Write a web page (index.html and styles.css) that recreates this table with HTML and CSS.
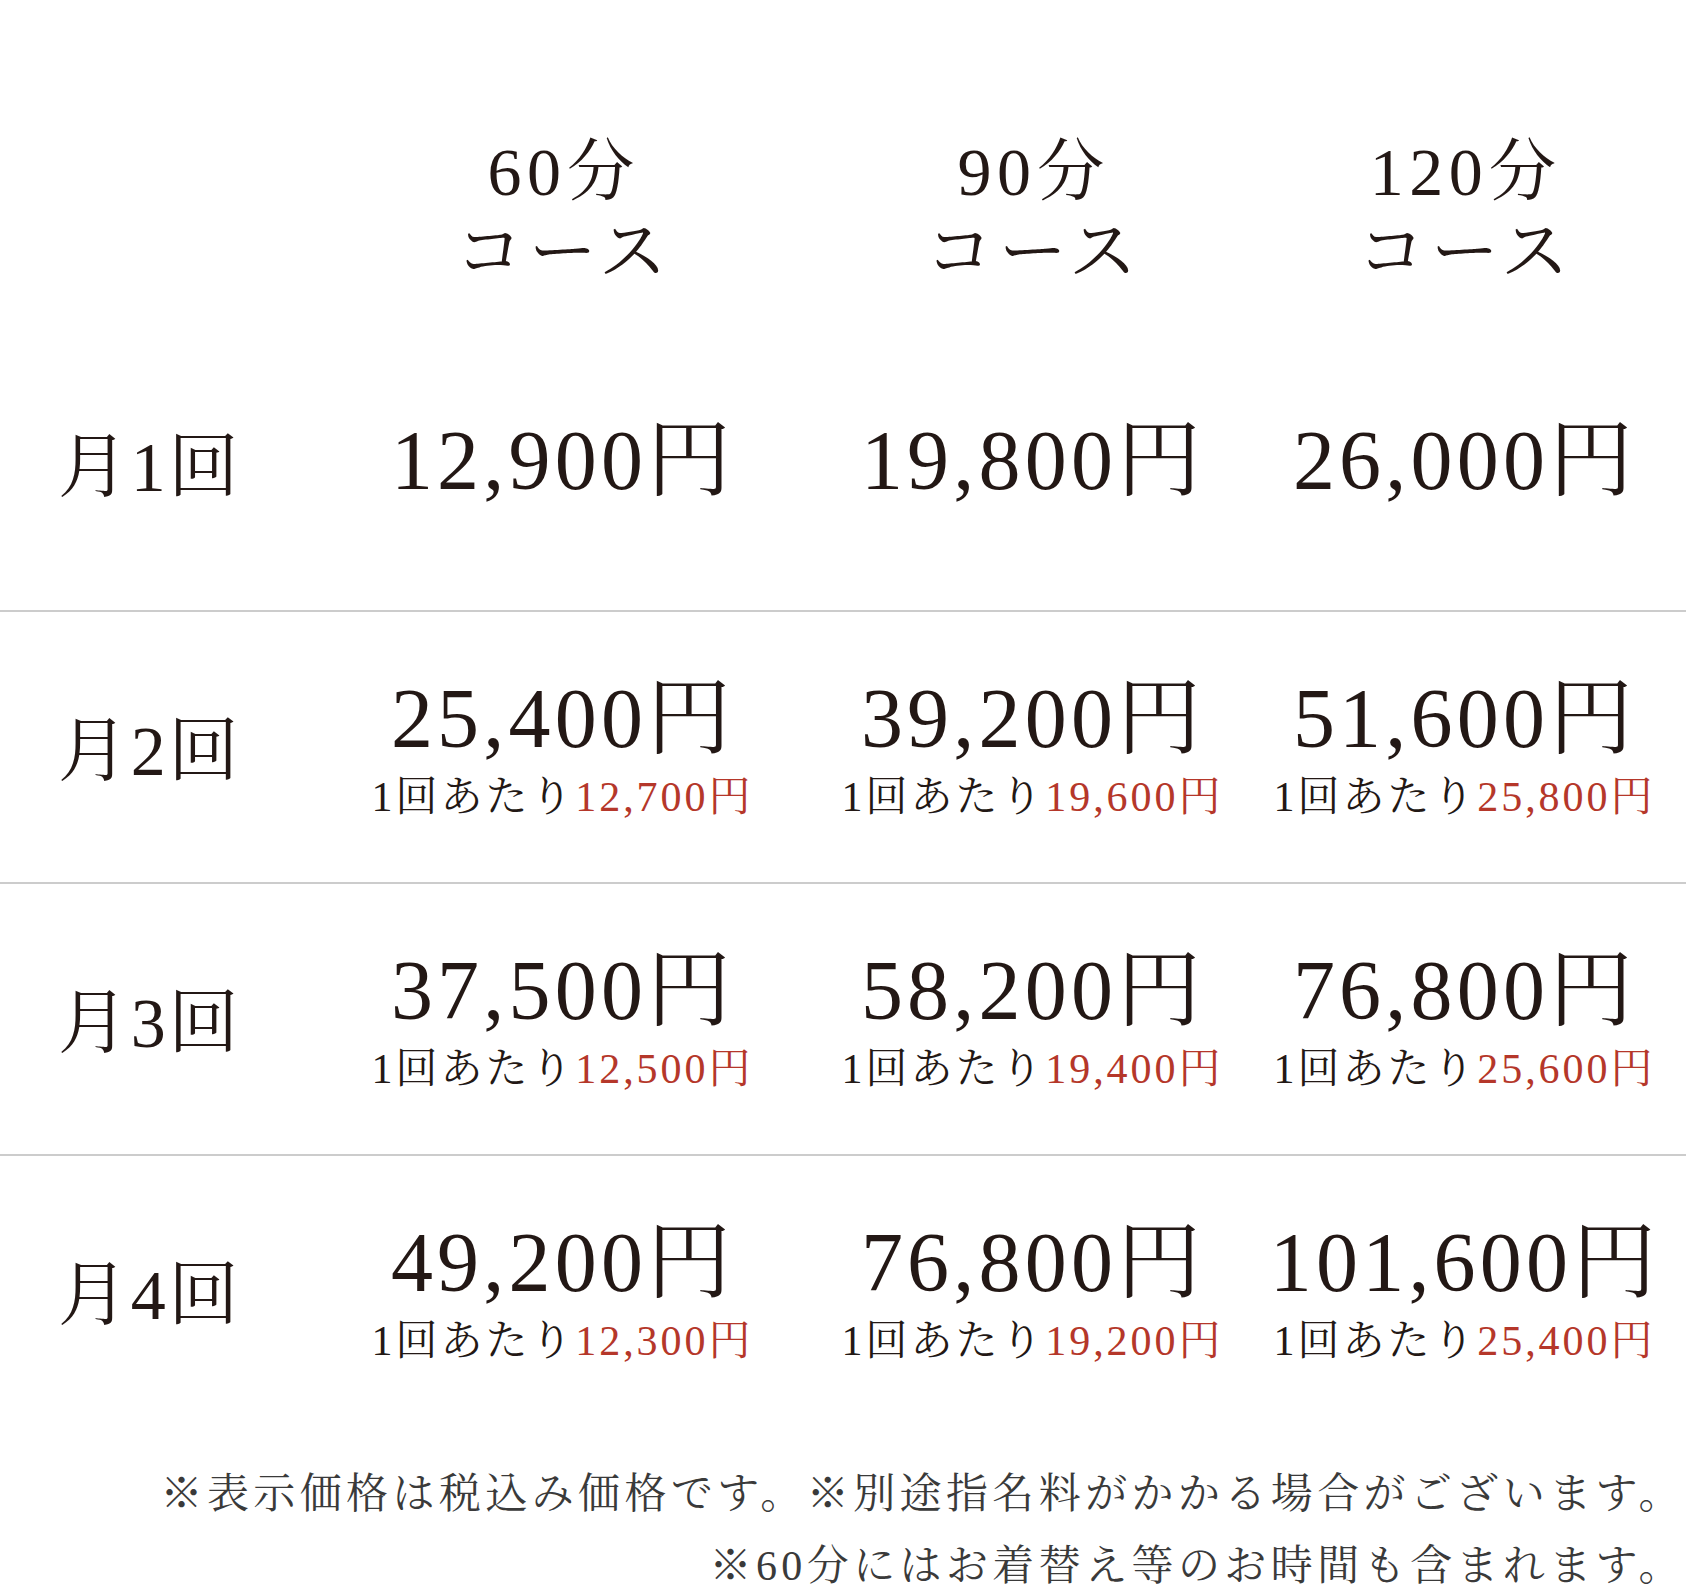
FILE: index.html
```html
<!DOCTYPE html>
<html lang="ja">
<head>
<meta charset="utf-8">
<title>料金表</title>
<link rel="stylesheet" href="styles.css">
</head>
<body>
<div class="price-table">
  <div class="row head">
    <div class="label"></div>
    <div class="cell"><div class="course">60分<br>コース</div></div>
    <div class="cell"><div class="course">90分<br>コース</div></div>
    <div class="cell"><div class="course">120分<br>コース</div></div>
  </div>
  <div class="row first">
    <div class="label">月1回</div>
    <div class="cell"><div class="price">12,900円</div></div>
    <div class="cell"><div class="price">19,800円</div></div>
    <div class="cell"><div class="price">26,000円</div></div>
  </div>
  <div class="row">
    <div class="label">月2回</div>
    <div class="cell"><div class="price">25,400円</div><div class="per">1回あたり<span class="red">12,700円</span></div></div>
    <div class="cell"><div class="price">39,200円</div><div class="per">1回あたり<span class="red">19,600円</span></div></div>
    <div class="cell"><div class="price">51,600円</div><div class="per">1回あたり<span class="red">25,800円</span></div></div>
  </div>
  <div class="row">
    <div class="label">月3回</div>
    <div class="cell"><div class="price">37,500円</div><div class="per">1回あたり<span class="red">12,500円</span></div></div>
    <div class="cell"><div class="price">58,200円</div><div class="per">1回あたり<span class="red">19,400円</span></div></div>
    <div class="cell"><div class="price">76,800円</div><div class="per">1回あたり<span class="red">25,600円</span></div></div>
  </div>
  <div class="row">
    <div class="label">月4回</div>
    <div class="cell"><div class="price">49,200円</div><div class="per">1回あたり<span class="red">12,300円</span></div></div>
    <div class="cell"><div class="price">76,800円</div><div class="per">1回あたり<span class="red">19,200円</span></div></div>
    <div class="cell"><div class="price">101,600円</div><div class="per">1回あたり<span class="red">25,400円</span></div></div>
  </div>
</div>
<div class="notes">
  <p>※表示価格は税込み価格です。※別途指名料がかかる場合がございます。</p>
  <p>※60分にはお着替え等のお時間も含まれます。</p>
</div>
</body>
</html>
```
FILE: styles.css
```css
html, body {
  margin: 0;
  padding: 0;
  background: #ffffff;
}
body {
  width: 1686px;
  font-family: "Liberation Serif", "Noto Serif CJK JP", "Noto Serif JP", "IPAexMincho", "IPAMincho", "Noto Sans CJK JP", serif;
  color: #231815;
}
.price-table {
  display: flex;
  flex-direction: column;
}
.row {
  display: grid;
  grid-template-columns: 300px 522px 418px 1fr;
  align-items: center;
  height: 270px;
  border-top: 2px solid #cccccc;
}
.row.head {
  border-top: none;
  height: auto;
  padding-top: 132px;
  padding-bottom: 32px;
  align-items: start;
}
.row.first {
  border-top: none;
  height: 286px;
}
.label {
  padding-top: 9px;
  padding-left: 58px;
  font-size: 70px;
  line-height: 1;
  letter-spacing: 0.04em;
  white-space: nowrap;
}
.row.first .label {
  padding-top: 2px;
}
.cell {
  display: flex;
  flex-direction: column;
  align-items: center;
}
.course {
  font-size: 68px;
  line-height: 80px;
  letter-spacing: 0.08em;
  padding-left: 0.08em;
  text-align: center;
}
.price {
  font-size: 84px;
  line-height: 1;
  letter-spacing: 0.05em;
  padding-left: 0.05em;
  white-space: nowrap;
}
.row.first .price {
  margin-bottom: 12px;
}
.per {
  margin-top: 15px;
  font-size: 42px;
  line-height: 1;
  letter-spacing: 0.07em;
  padding-left: 0.07em;
  white-space: nowrap;
}
.red {
  color: #b5372a;
}
.notes {
  padding-top: 32px;
  padding-right: 1px;
  text-align: right;
  color: #3a3a3a;
  font-size: 42px;
  letter-spacing: 4.4px;
}
.notes p {
  margin: 0;
  line-height: 72px;
}
```
